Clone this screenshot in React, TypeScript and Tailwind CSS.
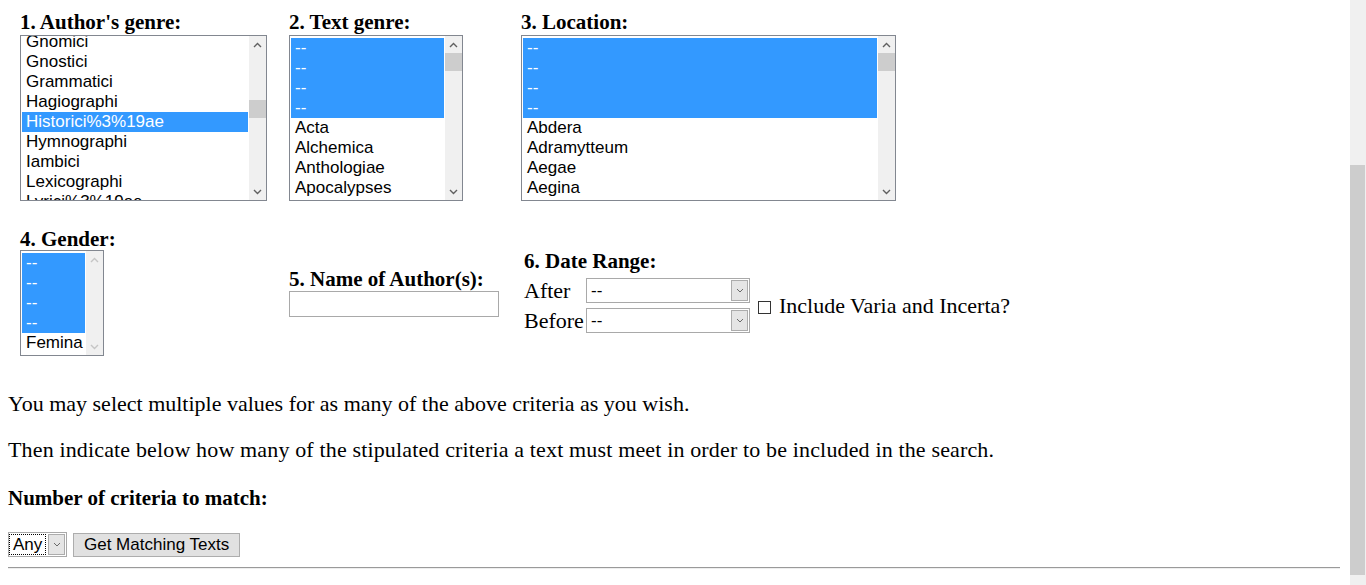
import React from 'react'

type Item = { label: string, selected?: boolean }

function Chevron ({ dir, light }: { dir: 'up' | 'down', light?: boolean }) {
  return (
    <svg width="9" height="6" viewBox="0 0 9 6" className="block">
      <polyline
        points={dir === 'up' ? '1,5 4.5,1.5 8,5' : '1,1 4.5,4.5 8,1'}
        fill="none"
        stroke={light ? '#c5c5c5' : '#606060'}
        strokeWidth="1.4"
      />
    </svg>
  )
}

function ListBox ({ width, height, items, offset = 0, thumb, disabled }: {
  width: string
  height: string
  items: Item[]
  offset?: number
  thumb?: number
  disabled?: boolean
}) {
  return (
    <div className={`flex border border-[#828790] bg-white font-['Liberation_Sans',Arial,sans-serif] ${width} ${height}`}>
      <div className="min-w-0 flex-1 overflow-hidden px-[1px] pt-[2px]">
        <div style={{ marginTop: offset }}>
          {items.map((item, i) => (
            <div
              key={i}
              className={`h-[20px] whitespace-nowrap pl-[4px] text-[17px] leading-[20px] ${item.selected ? 'bg-[#3399ff] text-white' : 'text-black'}`}
            >
              {item.label}
            </div>
          ))}
        </div>
      </div>
      <div className="relative flex w-[17px] flex-col items-center bg-[#f0f0f0]">
        <div className="flex h-[17px] items-center justify-center"><Chevron dir="up" light={disabled} /></div>
        <div className="relative w-full flex-1">
          {thumb !== undefined && (
            <div className="absolute left-0 h-[18px] w-[17px] bg-[#cdcdcd]" style={{ top: thumb }} />
          )}
        </div>
        <div className="flex h-[17px] items-center justify-center"><Chevron dir="down" light={disabled} /></div>
      </div>
    </div>
  )
}

function DropDown ({ width, value, focused }: { width: string, value: string, focused?: boolean }) {
  return (
    <div className={`flex h-[25px] items-center border border-[#a9a9a9] bg-white px-[1px] font-['Liberation_Sans',Arial,sans-serif] ${width}`}>
      <div className="flex min-w-0 flex-1 items-center">
        <span className={`px-[3px] text-[17px] leading-[19px] text-black ${focused ? 'outline outline-1 outline-dotted outline-black' : ''}`}>{value}</span>
      </div>
      <div className="flex h-[21px] w-[17px] items-center justify-center border border-[#acacac] bg-[#e5e5e5]">
        <svg width="8" height="5" viewBox="0 0 8 5">
          <polyline points="1,1 4,4 7,1" fill="none" stroke="#6a6a6a" strokeWidth="1" />
        </svg>
      </div>
    </div>
  )
}

const dash = (n: number): Item[] => Array.from({ length: n }, () => ({ label: '--', selected: true }))

export default function App () {
  const authorGenres: Item[] = [
    { label: 'Gnomici' },
    { label: 'Gnostici' },
    { label: 'Grammatici' },
    { label: 'Hagiographi' },
    { label: 'Historici%3%19ae', selected: true },
    { label: 'Hymnographi' },
    { label: 'Iambici' },
    { label: 'Lexicographi' },
    { label: 'Lyrici%3%19ae' }
  ]
  const textGenres: Item[] = [...dash(4), { label: 'Acta' }, { label: 'Alchemica' }, { label: 'Anthologiae' }, { label: 'Apocalypses' }]
  const locations: Item[] = [...dash(4), { label: 'Abdera' }, { label: 'Adramytteum' }, { label: 'Aegae' }, { label: 'Aegina' }]
  const genders: Item[] = [...dash(4), { label: 'Femina' }]

  return (
    <div className="flex h-[585px] overflow-hidden bg-white">
      <div className="min-w-0 flex-1 px-2 pt-2 font-['Liberation_Serif',serif] text-[22px] text-black">
        <div className="grid grid-cols-[269px_232px_auto] pt-[2px] pl-3">
          <div>
            <div className="h-[25px] text-[21px] font-bold leading-[25px]">1. Author's genre:</div>
            <ListBox width="w-[247px]" height="h-[166px]" items={authorGenres} offset={-6} thumb={47} />
          </div>
          <div>
            <div className="h-[25px] text-[21px] font-bold leading-[25px]">2. Text genre:</div>
            <ListBox width="w-[174px]" height="h-[166px]" items={textGenres} thumb={0} />
          </div>
          <div>
            <div className="h-[25px] text-[21px] font-bold leading-[25px]">3. Location:</div>
            <ListBox width="w-[375px]" height="h-[166px]" items={locations} thumb={0} />
          </div>
        </div>

        <div className="mt-[27px] grid grid-cols-[269px_235px_auto] items-center pl-3">
          <div>
            <div className="h-[22px] text-[21px] font-bold leading-[22px]">4. Gender:</div>
            <ListBox width="w-[84px]" height="h-[106px]" items={genders} disabled />
          </div>
          <div>
            <div className="h-[22px] text-[21px] font-bold leading-[22px]">5. Name of Author(s):</div>
            <input className="mt-[1px] block h-[26px] w-[210px] border border-[#a9a9a9] bg-white outline-none" />
          </div>
          <div>
            <div className="h-[26px] text-[21px] font-bold leading-[18px]">6. Date Range:</div>
            <div className="flex items-center">
              <div className="grid grid-cols-[62px_auto] items-center gap-y-[5px]">
                <span className="leading-[25px]">After</span>
                <DropDown width="w-[164px]" value="--" />
                <span className="leading-[25px]">Before</span>
                <DropDown width="w-[164px]" value="--" />
              </div>
              <span className="mt-[4px] mr-[8px] ml-[8px] h-[13px] w-[13px] border border-[#333333] bg-white" />
              <span className="leading-[25px]">Include Varia and Incerta?</span>
            </div>
          </div>
        </div>

        <p className="mt-[36px] leading-[24px]">You may select multiple values for as many of the above criteria as you wish.</p>
        <p className="mt-[22px] leading-[24px] tracking-[0.15px]">Then indicate below how many of the stipulated criteria a text must meet in order to be included in the search.</p>
        <p className="mt-[24px] text-[21px] font-bold leading-[24px]">Number of criteria to match:</p>

        <div className="mt-[22px] flex items-center gap-[6px] font-['Liberation_Sans',Arial,sans-serif]">
          <DropDown width="w-[59px]" value="Any" focused />
          <button className="h-[24px] border border-[#adadad] bg-[#e1e1e1] px-[10px] text-[17px] leading-[20px] text-black">Get Matching Texts</button>
        </div>

        <div className="mt-[10px] mr-[2px] border-t border-b border-t-[#9a9a9a] border-b-[#eeeeee]" />
      </div>
      <div className="flex w-[16px] flex-col bg-[#f0f0f0]">
        <div className="h-[165px]" />
        <div className="h-[410px] w-[15px] bg-[#cdcdcd]" />
      </div>
    </div>
  )
}
